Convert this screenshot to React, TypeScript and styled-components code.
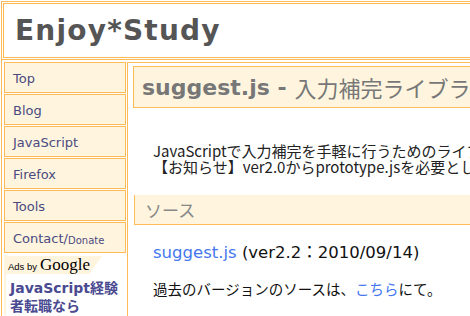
import React from "react";
import styled, { createGlobalStyle } from "styled-components";

const line = "#ffbb55";
const cream = "#fff5de";

const GlobalStyle = createGlobalStyle`
  html, body {
    margin: 0;
    padding: 0;
    background: #fff;
    overflow: hidden;
  }
  body {
    font-family: "DejaVu Sans", "Noto Sans CJK JP", sans-serif;
    color: #222;
  }
`;

const Page = styled.div`
  width: 760px;
  padding: 1px 0 0 1px;
`;

const Header = styled.header`
  height: 53px;
  border: 3px double ${line};
  display: flex;
  align-items: center;
  padding-left: 11px;
`;

const SiteTitle = styled.h1`
  margin: 0;
  font-size: 28px;
  font-weight: bold;
  color: #555;
  letter-spacing: 1.2px;
`;

const Columns = styled.div`
  display: grid;
  grid-template-columns: 126px 1fr;
  height: 260px;
`;

const Side = styled.nav`
  border-left: 1px solid ${line};
  padding: 2px 1px 0 2px;
  display: flex;
  flex-direction: column;
  gap: 1px;
`;

const NavItem = styled.a`
  display: flex;
  align-items: center;
  box-sizing: content-box;
  height: 26px;
  padding: 3px 0 0 8px;
  border: 1px solid ${line};
  background: ${cream};
  font-size: 13px;
  line-height: 16px;
  color: #4a4a80;
  text-decoration: none;
`;

const Small = styled.span`
  font-size: 10px;
  padding-top: 3px;
`;

const AdBox = styled.div`
  margin-top: 1px;
  border-left: 2px solid ${cream};
  background: #fff;
`;

const AdTab = styled.div`
  display: inline-flex;
  align-items: baseline;
  gap: 3px;
  height: 18px;
  margin-left: -2px;
  padding: 0 12px 0 4px;
  background: ${cream};
  clip-path: polygon(0 0, 100% 0, 87% 100%, 0 100%);
  white-space: nowrap;
  font-family: "Liberation Sans", sans-serif;
  font-size: 9.5px;
  color: #000;
`;

const Google = styled.span`
  font-family: "Liberation Serif", serif;
  font-size: 17px;
  line-height: 18px;
  color: #000;
`;

const AdLink = styled.a`
  display: block;
  margin: 5px 0 0 4px;
  font-size: 14px;
  font-weight: bold;
  line-height: 18px;
  color: #4a4a90;
  text-decoration: none;
`;

const Main = styled.main`
  border-left: 1px solid ${line};
  border-top: 1px solid ${line};
  margin-top: 2px;
  padding: 3px 0 0 5px;
`;

const PageTitle = styled.h2`
  margin: 0;
  box-sizing: border-box;
  height: 42px;
  border: 1px solid ${line};
  background: ${cream};
  padding-left: 8px;
  display: flex;
  align-items: center;
  white-space: nowrap;
  font-size: 22px;
  color: #777;
`;

const TitleSub = styled.span`
  font-family: "Noto Sans CJK JP", sans-serif;
  font-weight: normal;
  font-size: 22px;
  margin-left: 8px;
`;

const Lead = styled.p`
  margin: 35px 0 0 20px;
  font-family: "Noto Sans CJK JP", sans-serif;
  font-size: 15px;
  line-height: 16px;
  color: #222;
  white-space: nowrap;
`;

const SectionHead = styled.h3`
  margin: 20px 0 0 1px;
  height: 29px;
  border-left: 1px solid ${line};
  border-bottom: 1px solid ${line};
  background: ${cream};
  display: flex;
  align-items: center;
  padding-left: 10px;
  font-family: "Noto Sans CJK JP", sans-serif;
  font-weight: normal;
  font-size: 17px;
  color: #888;
`;

const Para = styled.p<{ $gap: number; $size: number }>`
  margin: ${(p) => p.$gap}px 0 0 20px;
  font-size: ${(p) => p.$size}px;
  line-height: 20px;
  color: #111;
  white-space: nowrap;
`;

const Link = styled.a`
  color: #4477ee;
  text-decoration: none;
`;

const navItems = ["Top", "Blog", "JavaScript", "Firefox", "Tools"];

const App: React.FC = () => {
  return (
    <>
      <GlobalStyle />
      <Page>
        <Header>
          <SiteTitle>Enjoy*Study</SiteTitle>
        </Header>
        <Columns>
          <Side>
            {navItems.map((item) => (
              <NavItem key={item} href="#">
                {item}
              </NavItem>
            ))}
            <NavItem href="#">
              Contact/<Small>Donate</Small>
            </NavItem>
            <AdBox>
              <AdTab>
                Ads by <Google>Google</Google>
              </AdTab>
              <AdLink href="#">
                JavaScript経験
                <br />
                者転職なら
              </AdLink>
            </AdBox>
          </Side>
          <Main>
            <PageTitle>
              suggest.js -<TitleSub>入力補完ライブラリ</TitleSub>
            </PageTitle>
            <Lead>
              JavaScriptで入力補完を手軽に行うためのライブラリです。
              <br />
              【お知らせ】ver2.0からprototype.jsを必要としなくなりました。
            </Lead>
            <SectionHead>ソース</SectionHead>
            <Para $gap={18} $size={16.5}>
              <Link href="#">suggest.js</Link> (ver2.2：2010/09/14)
            </Para>
            <Para $gap={17} $size={14.5}>
              過去のバージョンのソースは、<Link href="#">こちら</Link>にて。
            </Para>
          </Main>
        </Columns>
      </Page>
    </>
  );
};

export default App;
